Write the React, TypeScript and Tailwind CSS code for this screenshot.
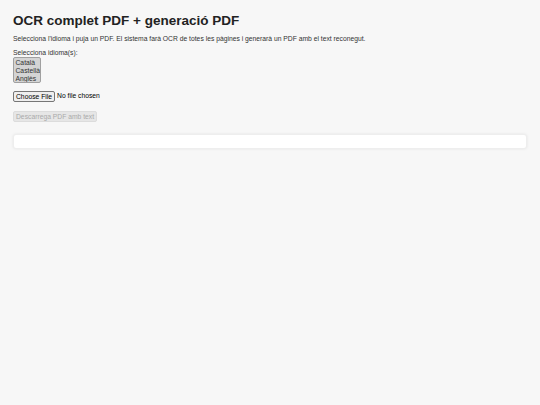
import React from 'react'

const languages = ['Català', 'Castellà', 'Anglès']

const App = () => {
  return (
    <div className="min-h-[405px] bg-[#f7f7f7] px-[13px] pt-[13px] font-['Liberation_Sans',Arial,sans-serif] text-[6.75px] text-[#333]">
      <h1 className="text-[13.5px] font-bold leading-[16px] mb-[5px] text-[#222]">OCR complet PDF + generació PDF</h1>

      <p className="leading-[9px] mb-[6px]">
        Selecciona l'idioma i puja un PDF. El sistema farà OCR de totes les pàgines i generarà un PDF amb el text reconegut.
      </p>

      <label className="block leading-[8px]">Selecciona idioma(s):</label>
      <div
        role="listbox"
        aria-multiselectable="true"
        className="w-[28px] h-[26px] bg-[#d4d4d4] border border-[#a0a0a0] rounded-[2px] flex flex-col pt-[0.5px] overflow-hidden"
      >
        {languages.map((lang) => (
          <div key={lang} role="option" className="px-[1.5px] leading-[8px] whitespace-nowrap">
            {lang}
          </div>
        ))}
      </div>

      <div className="flex items-center mt-[8px]">
        <button className="h-[11px] px-[2px] bg-[#efefef] border border-[#767676] rounded-[2px] text-[6.75px] leading-[8px] text-black">Choose File</button>
        <span className="ml-[2px] text-black">No file chosen</span>
      </div>

      <button
        disabled
        className="block mt-[9px] h-[11px] px-[2px] bg-[#e6e6e6] border border-[#dcdcdc] rounded-[2px] text-[6.75px] leading-[8px] text-[#aaa]"
      >
        Descarrega PDF amb text
      </button>

      <div className="mt-[12px] h-[15px] bg-white rounded-[3px] border border-[#eeeeee] shadow-[0_0_3px_rgba(0,0,0,0.08)]"></div>
    </div>
  )
}

export default App
